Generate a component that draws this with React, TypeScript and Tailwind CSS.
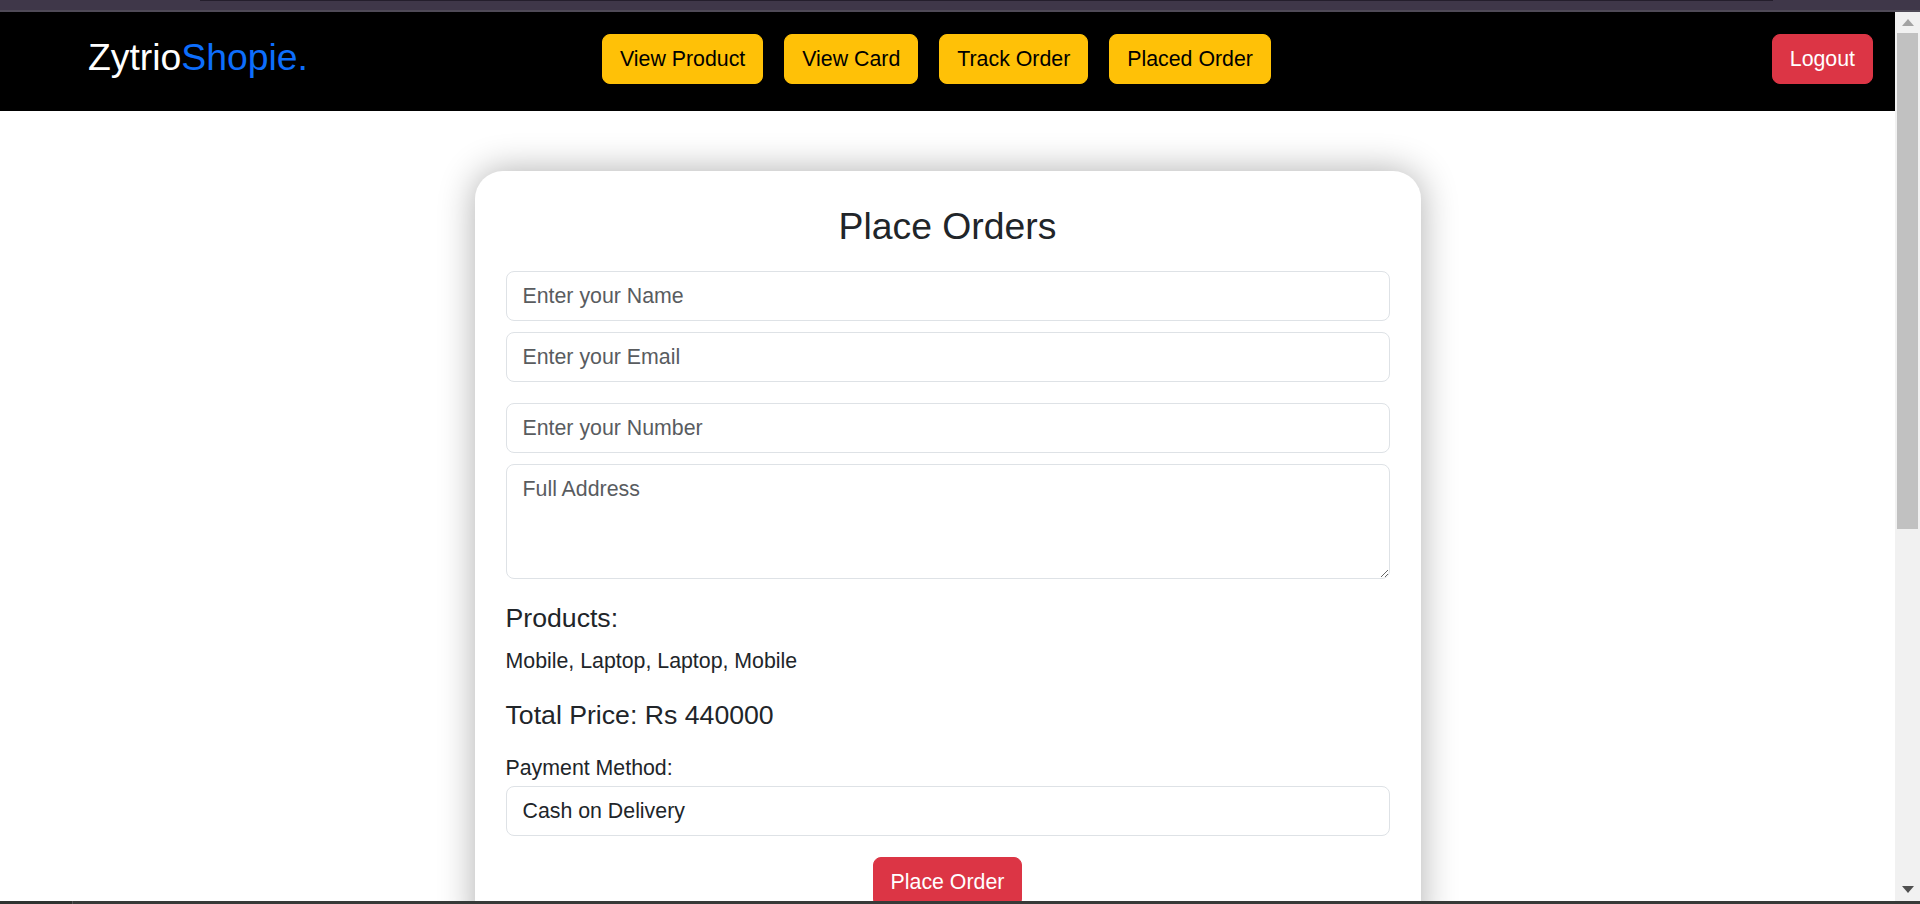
import React from "react";

const font = { fontFamily: '"Liberation Sans", Arial, sans-serif' };

function NavBtn({ label }: { label: string }) {
  return (
    <button className="h-[50px] px-[17px] rounded-[8px] bg-[#ffc107] border border-[#ffc107] text-black text-[21.33px] leading-[32px] whitespace-nowrap">
      {label}
    </button>
  );
}

function Field({ placeholder, className }: { placeholder: string; className: string }) {
  return (
    <input
      type="text"
      placeholder={placeholder}
      className={
        "block w-full h-[50px] px-[16px] py-[8px] border border-[#dee2e6] rounded-[8px] text-[21.33px] leading-[32px] text-[#212529] placeholder:text-[#595c5f] bg-white outline-none " +
        className
      }
    />
  );
}

export default function App() {
  return (
    <div className="h-[904px] w-[1920px] overflow-hidden flex flex-col bg-white" style={font}>
      {/* browser top strip */}
      <div className="h-[10px] bg-[#3f3749] flex">
        <div className="w-[200px]" />
        <div className="w-[1573px] h-[1px] bg-[#241e2c]" />
      </div>
      <div className="h-[2px] bg-[#4f4a57]" />

      <div className="flex flex-1 min-h-0">
        {/* page */}
        <div className="flex-1 min-w-0 flex flex-col overflow-hidden">
          <nav className="h-[99px] shrink-0 bg-black flex items-start pt-[22px] pl-[88px] pr-[22px]">
            <div className="w-[514px] shrink-0 text-[37.33px] leading-[44px] mt-[1px]">
              <span className="text-white">Zytrio</span>
              <span className="text-[#0d6efd]">Shopie.</span>
            </div>
            <div className="flex gap-[21px]">
              <NavBtn label="View Product" />
              <NavBtn label="View Card" />
              <NavBtn label="Track Order" />
              <NavBtn label="Placed Order" />
            </div>
            <button className="ml-auto h-[50px] px-[17px] rounded-[8px] bg-[#dc3545] border border-[#dc3545] text-white text-[21.33px] leading-[32px]">
              Logout
            </button>
          </nav>

          <div className="flex-1 min-h-0 overflow-hidden pt-[60px]">
            <div className="mx-auto w-[946px] rounded-[28px] bg-white shadow-[0_0_36px_rgba(0,0,0,0.32)] px-[31px] pt-[33px] pb-[40px]">
              <h3 className="text-center text-[37.33px] leading-[45px] text-[#212529] mb-[22px]">Place Orders</h3>
              <Field placeholder="Enter your Name" className="mb-[11px]" />
              <Field placeholder="Enter your Email" className="mb-[21px]" />
              <Field placeholder="Enter your Number" className="mb-[11px]" />
              <textarea
                rows={3}
                placeholder="Full Address"
                className="block w-full h-[115px] px-[16px] py-[8px] border border-[#dee2e6] rounded-[8px] text-[21.33px] leading-[32px] text-[#212529] placeholder:text-[#595c5f] bg-white outline-none mb-[23px]"
              />
              <h5 className="text-[26.67px] leading-[32px] text-[#212529] mb-[11px]">Products:</h5>
              <p className="text-[21.33px] leading-[32px] text-[#212529] mb-[22px]">Mobile, Laptop, Laptop, Mobile</p>
              <h5 className="text-[26.67px] leading-[32px] text-[#212529] mb-[21px]">Total Price: Rs 440000</h5>
              <label className="block text-[21.33px] leading-[32px] text-[#212529] mb-[2px]">Payment Method:</label>
              <select className="block w-full h-[50px] px-[16px] border border-[#dee2e6] rounded-[8px] text-[21.33px] leading-[32px] text-[#212529] bg-white appearance-none outline-none mb-[21px]">
                <option>Cash on Delivery</option>
              </select>
              <div className="flex justify-center">
                <button className="h-[50px] px-[17px] rounded-[8px] bg-[#dc3545] border border-[#dc3545] text-white text-[21.33px] leading-[32px]">
                  Place Order
                </button>
              </div>
            </div>
          </div>
        </div>

        {/* scrollbar */}
        <div className="w-[25px] shrink-0 bg-[#f1f1f1] flex flex-col items-center">
          <div className="h-[21px] w-full flex items-center justify-center">
            <svg width="12" height="7" viewBox="0 0 12 7">
              <polygon points="6,0 12,7 0,7" fill="#a3a3a3" />
            </svg>
          </div>
          <div className="w-[21px] h-[496px] bg-[#c1c1c1]" />
          <div className="flex-1" />
          <div className="h-[24px] w-full flex items-center justify-center">
            <svg width="12" height="7" viewBox="0 0 12 7">
              <polygon points="0,0 12,0 6,7" fill="#505050" />
            </svg>
          </div>
        </div>
      </div>

      {/* bottom strip */}
      <div className="h-[3px] bg-[#373a38] flex">
        <div className="w-[72px] bg-[#2f3330]" />
        <div className="w-[1px] bg-[#555]" />
      </div>
    </div>
  );
}
